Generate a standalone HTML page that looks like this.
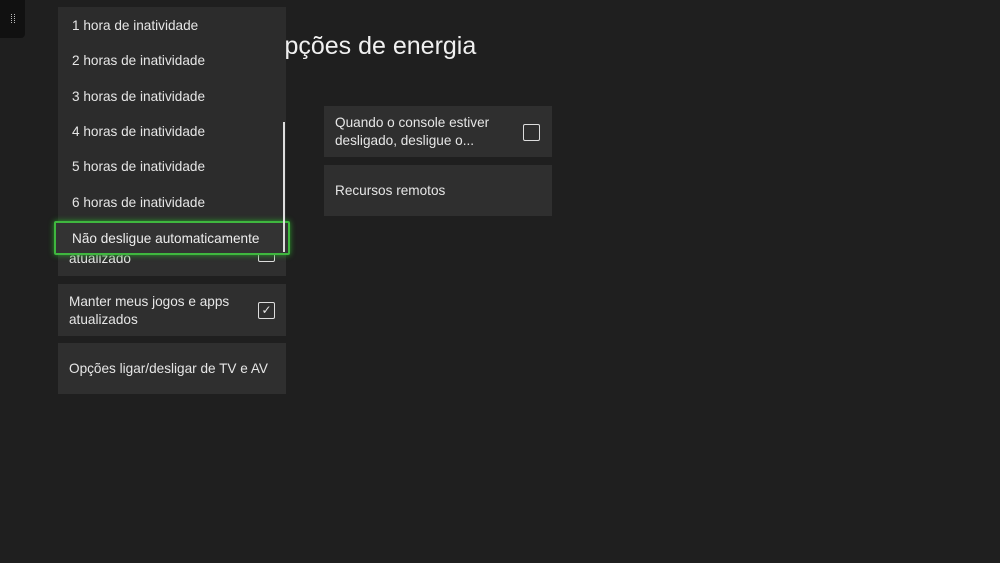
<!DOCTYPE html>
<html><head><meta charset="utf-8"><style>
body{margin:0;width:1000px;height:563px;background:#1f1f1f;overflow:hidden;position:relative;font-family:"Liberation Sans",sans-serif;color:#e8e8e8}
.a{position:absolute}
.card{position:absolute;background:#2f2f2f;font-size:13.6px;line-height:18px;color:#e6e6e6;box-sizing:border-box;padding-left:11px}
.cb{position:absolute;width:15px;height:15px;border:1.5px solid #ddd;border-radius:2px}
.it{position:absolute;left:14px;font-size:13.6px;color:#e6e6e6}
</style></head><body>
<div class="a" style="left:0;top:0;width:25px;height:38px;background:#111;border-radius:0 0 4px 0"></div>
<div class="a" style="left:11px;top:14px;width:4px;height:9px;border-left:1px dotted #bbb;border-right:1px dotted #bbb;box-sizing:border-box"></div>
<div class="a" style="left:265px;top:32px;font-size:25px;color:#f0f0f0">Opções de energia</div>
<div class="card" style="left:58px;top:225px;width:228px;height:51px;padding-top:25px">atualizado<div class="cb" style="left:200px;top:20px"></div></div>
<div class="card" style="left:58px;top:284px;width:228px;height:52px;padding-top:9px">Manter meus jogos e apps<br>atualizados<div class="cb" style="left:200px;top:18px;text-align:center;font-size:12px;line-height:15px">✓</div></div>
<div class="card" style="left:58px;top:343px;width:228px;height:51px;padding-top:17px">Opções ligar/desligar de TV e AV</div>
<div class="card" style="left:324px;top:106px;width:228px;height:51px;padding-top:8px">Quando o console estiver<br>desligado, desligue o...<div class="cb" style="left:199px;top:18px"></div></div>
<div class="card" style="left:324px;top:165px;width:228px;height:51px;padding-top:17px">Recursos remotos</div>
<div class="a" style="left:58px;top:7px;width:228px;height:240px;background:#2c2c2c">
<div class="it" style="top:11px">1 hora de inatividade</div>
<div class="it" style="top:46px">2 horas de inatividade</div>
<div class="it" style="top:82px">3 horas de inatividade</div>
<div class="it" style="top:117px">4 horas de inatividade</div>
<div class="it" style="top:152px">5 horas de inatividade</div>
<div class="it" style="top:188px">6 horas de inatividade</div>
</div>
<div class="a" style="left:54px;top:221px;width:236px;height:34px;box-sizing:border-box;border:2px solid #3fb73f;box-shadow:0 0 6px #2a9a2a;background:#333;border-radius:2px"><div style="position:absolute;left:16px;top:8px;font-size:13.6px;color:#eee">Não desligue automaticamente</div></div>
<div class="a" style="left:283px;top:122px;width:2px;height:130px;background:#ddd"></div>
</body></html>
